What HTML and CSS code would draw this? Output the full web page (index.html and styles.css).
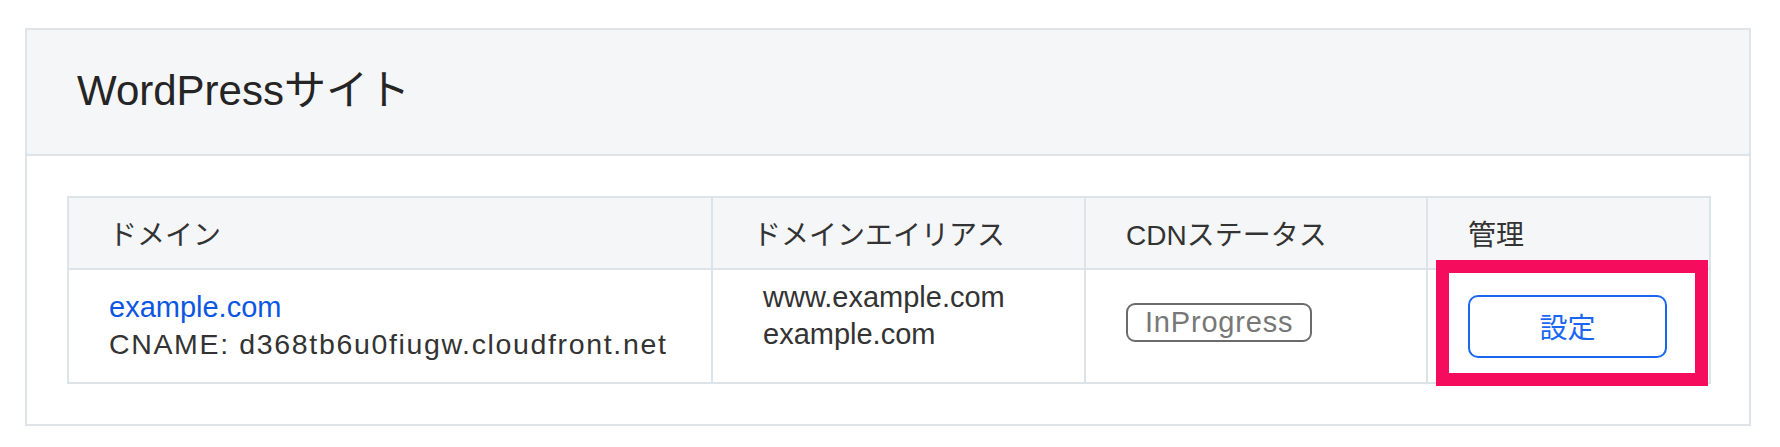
FILE: index.html
```html
<!DOCTYPE html>
<html lang="ja">
<head>
  <meta charset="UTF-8" />
  <meta name="viewport" content="width=device-width, initial-scale=1.0"/>
  <title>WordPressサイト</title>
  <link rel="stylesheet" href="styles.css">
</head>
<body>
  <div class="page">
    <section class="card">
      <div class="card-header">
        <h2 class="card-title">WordPressサイト</h2>
      </div>

      <div class="card-body">
        <table class="site-table">
          <colgroup>
            <col class="col-domain">
            <col class="col-alias">
            <col class="col-status">
            <col class="col-manage">
          </colgroup>
          <thead>
            <tr>
              <th>ドメイン</th>
              <th>ドメインエイリアス</th>
              <th>CDNステータス</th>
              <th>管理</th>
            </tr>
          </thead>
          <tbody>
            <tr>
              <td>
                <div class="domain-info">
                  <a class="domain-link" href="#">example.com</a>
                  <div class="cname">CNAME: d368tb6u0fiugw.cloudfront.net</div>
                </div>
              </td>
              <td>
                <ul class="alias-list">
                  <li>www.example.com</li>
                  <li>example.com</li>
                </ul>
              </td>
              <td>
                <span class="status-badge">InProgress</span>
              </td>
              <td class="cell-manage">
                <button class="btn-setting">設定</button>
                <span class="highlight-box"></span>
              </td>
            </tr>
          </tbody>
        </table>
      </div>
    </section>
  </div>
</body>
</html>
```

FILE: styles.css
```css
body {
  margin: 0;
  background-color: #fff;
  font-family: "Liberation Sans", "Noto Sans CJK JP", sans-serif;
  color: #333;
}

.page {
  padding: 28px 29px 22px 25px;
}

.card {
  border: 2px solid #dfe4e8;
}

.card-header {
  background-color: #f5f6f8;
  border-bottom: 2px solid #dfe4e8;
  padding: 39px 50px 41px;
}

.card-title {
  margin: 0;
  font-size: 42px;
  line-height: 44px;
  font-weight: normal;
  color: #252525;
}

.card-body {
  padding: 40px;
}

.site-table {
  width: 100%;
  table-layout: fixed;
  border-collapse: collapse;
  border: 2px solid #dde4e9;
}

.col-domain { width: 644px; }
.col-alias { width: 373px; }
.col-status { width: 342px; }
.col-manage { width: 283px; }

.site-table th,
.site-table td {
  border: 2px solid #dde4e9;
  padding: 0 40px;
  text-align: left;
  vertical-align: middle;
  font-size: 28px;
}

.site-table th {
  height: 70px;
  background-color: #f5f6f8;
  font-weight: normal;
  color: #333;
}

.site-table td {
  height: 112px;
}

.domain-info {
  line-height: 37px;
  padding-bottom: 1px;
}

.domain-link {
  font-size: 29px;
  color: #0b57e3;
  text-decoration: none;
}

.cname {
  font-size: 28.5px;
  letter-spacing: 1.65px;
  color: #333;
}

.alias-list {
  list-style: none;
  margin: 0;
  padding: 0 0 20px 10px;
  font-size: 29px;
  line-height: 37px;
  color: #333;
}

.status-badge {
  display: inline-block;
  margin-bottom: 7px;
  border: 2px solid #6b6b6b;
  border-radius: 9px;
  padding: 0 17px;
  height: 35px;
  line-height: 35px;
  font-size: 29px;
  letter-spacing: 0.8px;
  color: #777;
}

.cell-manage {
  position: relative;
}

.btn-setting {
  display: block;
  width: 199px;
  height: 63px;
  border: 2px solid #1a66f0;
  border-radius: 10px;
  background-color: #fff;
  color: #1a66f0;
  font-family: "Noto Sans CJK JP", sans-serif;
  font-size: 28px;
  cursor: pointer;
}

/* 注目枠 */
.highlight-box {
  position: absolute;
  top: -10px;
  left: 8px;
  right: 1px;
  bottom: -4px;
  border: 13px solid #f50c5c;
  pointer-events: none;
}
```
